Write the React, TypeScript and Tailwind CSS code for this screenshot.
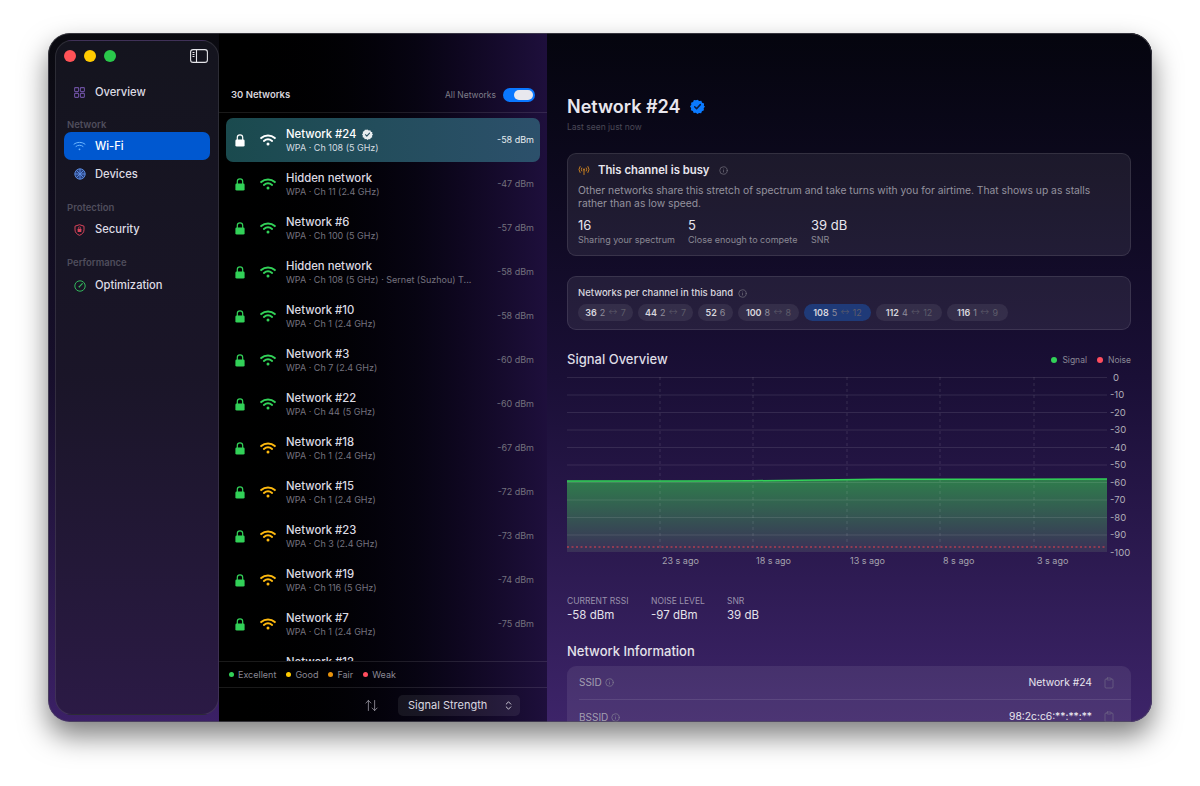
import { ArrowUpDown, ChevronsUpDown, Info, Clipboard } from "lucide-react";

const networks = [
  { name: "Network #24", sub: "WPA · Ch 108 (5 GHz)", dbm: "-58 dBm", tone: "white", verified: true },
  { name: "Hidden network", sub: "WPA · Ch 11 (2.4 GHz)", dbm: "-47 dBm", tone: "green" },
  { name: "Network #6", sub: "WPA · Ch 100 (5 GHz)", dbm: "-57 dBm", tone: "green" },
  { name: "Hidden network", sub: "WPA · Ch 108 (5 GHz) · Sernet (Suzhou) T...", dbm: "-58 dBm", tone: "green" },
  { name: "Network #10", sub: "WPA · Ch 1 (2.4 GHz)", dbm: "-58 dBm", tone: "green" },
  { name: "Network #3", sub: "WPA · Ch 7 (2.4 GHz)", dbm: "-60 dBm", tone: "green" },
  { name: "Network #22", sub: "WPA · Ch 44 (5 GHz)", dbm: "-60 dBm", tone: "green" },
  { name: "Network #18", sub: "WPA · Ch 1 (2.4 GHz)", dbm: "-67 dBm", tone: "yellow" },
  { name: "Network #15", sub: "WPA · Ch 1 (2.4 GHz)", dbm: "-72 dBm", tone: "yellow" },
  { name: "Network #23", sub: "WPA · Ch 3 (2.4 GHz)", dbm: "-73 dBm", tone: "yellow" },
  { name: "Network #19", sub: "WPA · Ch 116 (5 GHz)", dbm: "-74 dBm", tone: "yellow" },
  { name: "Network #7", sub: "WPA · Ch 1 (2.4 GHz)", dbm: "-75 dBm", tone: "yellow" },
  // only the top of this row shows above the legend
  { name: "Network #12", sub: "", dbm: "", tone: "" },
];

const toneColor: Record<string, string> = { white: "#ffffff", green: "#32d158", yellow: "#fdb90f" };

const channels = [
  { ch: "36", a: "2", b: "7", w: "w-[55px]" },
  { ch: "44", a: "2", b: "7", w: "w-[55px]" },
  { ch: "52", a: "6", b: "", w: "w-[35px]" },
  { ch: "100", a: "8", b: "8", w: "w-[61px]" },
  { ch: "108", a: "5", b: "12", w: "w-[67px]", active: true },
  { ch: "112", a: "4", b: "12", w: "w-[66px]" },
  { ch: "116", a: "1", b: "9", w: "w-[61px]" },
];

function Wifi({ color }: { color: string }) {
  return (
    <svg width="16" height="12" viewBox="0 0 16 12" fill="none" stroke={color} strokeWidth="2" strokeLinecap="round">
      <path d="M1.200 4.100C5 .7 11 .7 14.800 4.100" />
      <path d="M3.900 6.900c2.400-2 5.800-2 8.200 0" />
      <circle cx="8" cy="10" r="1.500" fill={color} stroke="none" />
    </svg>
  );
}

function Lock({ color }: { color: string }) {
  return (
    <svg width="10" height="13" viewBox="0 0 10 13" fill="none">
      <path d="M2.300 6V3.600a2.700 2.700 0 0 1 5.400 0V6" stroke={color} strokeWidth="1.200" />
      <rect x=".4" y="5.400" width="9.200" height="7.200" rx="1.400" fill={color} />
    </svg>
  );
}

function Badge({ size, fill, check }: { size: number; fill: string; check: string }) {
  return (
    <svg width={size} height={size} viewBox="0 0 24 24">
      <path
        fill={fill}
        d="M12 1l2.700 2.100 3.400-.4 1.300 3.200 3.200 1.300-.4 3.400L24 12l-2.100 2.700.4 3.400-3.200 1.300-1.300 3.200-3.400-.4L12 24l-2.700-2.100-3.400.4-1.300-3.200-3.200-1.300.4-3.400L0 12l2.100-2.700-.4-3.400 3.200-1.300 1.300-3.200 3.400.4z"
      />
      <path d="M7.500 12.500l3 3 6-6.500" fill="none" stroke={check} strokeWidth="2.400" strokeLinecap="round" strokeLinejoin="round" />
    </svg>
  );
}

function NavItem({ icon, label, active }: { icon: React.ReactNode; label: string; active?: boolean }) {
  return (
    <div className={`flex h-[28px] items-center rounded-[7px] pl-[7px] text-[11.200px] font-medium ${active ? "bg-[#0058d0] text-white" : "text-[#dedce4]"}`}>
      <span className="flex w-[17px] justify-center">{icon}</span>
      <span className="ml-[7px]">{label}</span>
    </div>
  );
}

function SectionLabel({ children }: { children: string }) {
  return <div className="pl-[3px] text-[9.500px] font-semibold text-[#4f4d5c]">{children}</div>;
}

function Sidebar() {
  return (
    <aside className="flex w-[164px] flex-col rounded-[17px] border border-white/10 bg-gradient-to-b from-[#14141e] via-[#1a1528] to-[#2b1a45] px-[8px] pt-[8px]">
      <div className="flex h-[14px] items-center">
        <span className="h-[12px] w-[12px] rounded-full bg-[#ff5257]" />
        <span className="ml-[8px] h-[12px] w-[12px] rounded-full bg-[#ffcb00]" />
        <span className="ml-[8px] h-[12px] w-[12px] rounded-full bg-[#2ac84b]" />
        <svg className="ml-auto mr-[2px]" width="18" height="14" viewBox="0 0 18 14" fill="none">
          <rect x=".6" y=".6" width="16.800" height="12.800" rx="2.500" stroke="#e5e5ea" strokeWidth="1.100" />
          <path d="M6.500 .6v12.800" stroke="#e5e5ea" strokeWidth="1.100" />
          <path d="M2.500 3.500h2M2.500 5.500h2M2.500 7.500h2" stroke="#e5e5ea" strokeWidth="1" />
        </svg>
      </div>
      <div className="mt-[15px]">
        <NavItem
          label="Overview"
          icon={
            <svg width="11" height="11" viewBox="0 0 11 11" fill="none" stroke="#6b4f9e" strokeWidth="1.100">
              <rect x=".6" y=".6" width="4" height="4" rx=".8" />
              <rect x="6.400" y=".6" width="4" height="4" rx=".8" />
              <rect x=".6" y="6.400" width="4" height="4" rx=".8" />
              <rect x="6.400" y="6.400" width="4" height="4" rx=".8" />
            </svg>
          }
        />
      </div>
      <div className="mt-[12px]">
        <SectionLabel>Network</SectionLabel>
      </div>
      <NavItem
        active
        label="Wi-Fi"
        icon={
          <svg width="13" height="10" viewBox="0 0 13 10" fill="none" stroke="#6cb6ff" strokeWidth="1" strokeLinecap="round">
            <path d="M1 3.200c3-2.500 8-2.500 11 0" />
            <path d="M3 5.400c2-1.600 5-1.600 7 0" />
            <circle cx="6.500" cy="8.300" r=".9" fill="#6cb6ff" stroke="none" />
          </svg>
        }
      />
      <NavItem
        label="Devices"
        icon={
          <svg width="12" height="12" viewBox="0 0 12 12" fill="none" stroke="#5d8ee6" strokeWidth=".9">
            <circle cx="6" cy="6" r="5.200" fill="#28407c" />
            <path d="M6 .8v10.400M.8 6h10.400M2.400 2.400l7.200 7.200M9.600 2.400l-7.200 7.200" />
          </svg>
        }
      />
      <div className="mt-[13px]">
        <SectionLabel>Protection</SectionLabel>
      </div>
      <NavItem
        label="Security"
        icon={
          <svg width="11" height="12" viewBox="0 0 11 12" fill="none">
            <path d="M5.500 .7l4.500 1.500v3.600c0 2.800-2 4.600-4.500 5.500C3 10.400 1 8.600 1 5.800V2.200z" stroke="#d9445a" strokeWidth="1" />
            <rect x="3.600" y="4.700" width="3.800" height="3.300" rx=".5" fill="#d9445a" />
            <path d="M4.400 4.800V4a1.100 1.100 0 0 1 2.200 0v.8" stroke="#d9445a" strokeWidth=".7" />
          </svg>
        }
      />
      <div className="mt-[12px] mb-[2px]">
        <SectionLabel>Performance</SectionLabel>
      </div>
      <NavItem
        label="Optimization"
        icon={
          <svg width="12" height="12" viewBox="0 0 12 12" fill="none" stroke="#32b65c" strokeWidth="1">
            <circle cx="6" cy="6" r="5.200" />
            <path d="M5.400 6.600L8.300 3.600" strokeWidth="1.200" strokeLinecap="round" />
            <circle cx="5.300" cy="6.700" r=".8" fill="#32b65c" stroke="none" />
          </svg>
        }
      />
    </aside>
  );
}

function NetworkRow({ n }: { n: (typeof networks)[number] }) {
  const selected = n.verified;
  return (
    <div className={`flex h-[44px] shrink-0 items-center rounded-[7px] ${selected ? "bg-gradient-to-r from-[#1a4a4e] to-[#2c506b]" : ""}`}>
      <span className="flex w-[28px] justify-center">{n.tone && <Lock color={selected ? "#ffffff" : "#32d158"} />}</span>
      <span className="ml-[6px] flex w-[16px] justify-center">{n.tone && <Wifi color={toneColor[n.tone]} />}</span>
      <div className="ml-[10px] min-w-0 flex-1">
        <div className={`flex items-center text-[11.300px] font-medium leading-[17px] ${selected ? "text-white" : "text-[#dcdae2]"}`}>
          {n.name}
          {selected && (
            <span className="ml-[5px]">
              <Badge size={11} fill="#e8edf0" check="#2a5060" />
            </span>
          )}
        </div>
        <div className={`-mt-[2px] h-[13px] whitespace-nowrap text-[9px] leading-[13px] ${selected ? "text-[#d5dde2]" : "text-[#75737f]"}`}>{n.sub}</div>
      </div>
      {n.dbm && <span className={`mr-[6px] text-[9px] ${selected ? "text-[#e6ecef]" : "text-[#73717d]"}`}>{n.dbm}</span>}
    </div>
  );
}

function ListPanel() {
  return (
    <section className="flex w-[328px] flex-col bg-gradient-to-r from-black via-[#070412] via-60% to-[#1e0f3c]">
      <div className="flex h-[80px] items-end border-b border-white/10 px-[12px] pb-[10px]">
        <span className="text-[9.500px] font-semibold leading-[14px] text-[#d6d4dc]">30 Networks</span>
        <span className="ml-auto text-[8.500px] leading-[14px] text-[#7f7d89]">All Networks</span>
        <span className="ml-[7px] flex h-[14px] w-[32px] items-center justify-end rounded-full bg-[#0a78ff] pr-[2px]">
          <span className="h-[10px] w-[19px] rounded-full bg-[#e8e8ee]" />
        </span>
      </div>
      <div className="flex min-h-0 flex-1 flex-col overflow-hidden px-[7px] pt-[5px]">
        {networks.map((n, i) => (
          <NetworkRow key={i} n={n} />
        ))}
      </div>
      <div className="flex h-[27px] shrink-0 items-center gap-[10px] border-y border-white/10 pl-[10px] text-[9px] leading-[12px] text-[#8a8894]">
        <Legend color="bg-[#32d158]" label="Excellent" />
        <Legend color="bg-[#ffcc00]" label="Good" />
        <Legend color="bg-[#e8930c]" label="Fair" />
        <Legend color="bg-[#ff4d5e]" label="Weak" />
      </div>
      <div className="flex h-[34px] shrink-0 items-center justify-end pr-[27px]">
        <ArrowUpDown size={15} strokeWidth={1.200} color="#a8a6b0" className="mr-[19px]" />
        <div className="flex h-[21px] w-[122px] items-center rounded-[5px] bg-white/[0.07] pl-[10px] text-[11px] text-[#dad8e0]">
          Signal Strength
          <ChevronsUpDown size={11} color="#dad8e0" className="ml-auto mr-[6px]" />
        </div>
      </div>
    </section>
  );
}

function Legend({ color, label }: { color: string; label: string }) {
  return (
    <span className="flex shrink-0 items-center gap-[4px] whitespace-nowrap">
      <span className={`h-[5px] w-[5px] rounded-full ${color}`} />
      {label}
    </span>
  );
}

function Stat({ value, label, className }: { value: string; label: string; className: string }) {
  return (
    <div className={className}>
      <div className="text-[13px] leading-[17px] text-[#e8e6ee]">{value}</div>
      <div className="-mt-[1px] text-[9px] leading-[13px] text-[#8b8994]">{label}</div>
    </div>
  );
}

function SignalChart() {
  const ys = [0, 10, 20, 30, 40, 50, 60, 70, 80, 90];
  const xs = [93, 186, 280, 373, 467];
  const ticks = [
    { x: 95, t: "23 s ago" },
    { x: 189, t: "18 s ago" },
    { x: 283, t: "13 s ago" },
    { x: 376, t: "8 s ago" },
    { x: 470, t: "3 s ago" },
  ];
  const line = "M0 105 L120 105 C180 105 220 104.500 290 103.500 C340 103 370 103 540 103";
  return (
    <svg width="564" height="198" viewBox="0 0 564 198" className="mt-[7px] block overflow-visible">
      <defs>
        <linearGradient id="area" x1="0" y1="103" x2="0" y2="176" gradientUnits="userSpaceOnUse">
          <stop offset="0" stopColor="#2f7d4c" />
          <stop offset="1" stopColor="#3a3058" />
        </linearGradient>
      </defs>
      <path d={`${line} V176 H0 Z`} fill="url(#area)" />
      {ys.map((v) => (
        <line key={v} x1="0" x2="540" y1={1.500 + v * 1.750} y2={1.500 + v * 1.750} stroke="#ffffff" strokeOpacity=".1" />
      ))}
      {xs.map((x) => (
        <line key={x} x1={x} x2={x} y1="1" y2="172" stroke="#ffffff" strokeOpacity=".12" strokeDasharray="3 3" />
      ))}
      <path d={line} fill="none" stroke="#32d158" strokeWidth="1.500" />
      <line x1="0" x2="540" y1="171" y2="171" stroke="#e8434f" strokeWidth="1.200" strokeDasharray="2 2.500" />
      {[...ys, 100].map((v) => (
        <text key={v} x={v === 0 ? 546 : 543} y={4.500 + v * 1.750} fontSize="9.500" fill="#b0aeb8">
          {v === 0 ? "0" : `-${v}`}
        </text>
      ))}
      {ticks.map((t) => (
        <text key={t.t} x={t.x} y="188" fontSize="9" fill="#a5a3ae">
          {t.t}
        </text>
      ))}
    </svg>
  );
}

function InfoRow({ label, value, border }: { label: string; value: string; border?: boolean }) {
  return (
    <div className={`ml-[12px] flex h-[34px] shrink-0 items-center pr-[16px] ${border ? "border-b border-white/10" : ""}`}>
      <span className="text-[10px] text-[#a39fb0]">{label}</span>
      <Info size={9} color="#7f7a90" className="ml-[3px]" />
      <span className="ml-auto text-[10.300px] text-[#e8e6ee]">{value}</span>
      <Clipboard size={12} strokeWidth={1.200} color="#77708c" className="ml-[11px]" />
    </div>
  );
}

function DetailPanel() {
  return (
    <section className="min-w-0 flex-1 overflow-hidden bg-gradient-to-b from-[#05050e] via-[#1a0f36] via-50% to-[#3d2469] pl-[20px] pr-[21px]">
      <div className="mt-[60px] flex h-[26px] items-center">
        <h1 className="text-[18px] font-semibold text-[#e9e7ee]">Network #24</h1>
        <span className="ml-[9px]">
          <Badge size={15} fill="#0a7aff" check="#0a1a40" />
        </span>
      </div>
      <div className="mt-[1px] text-[8.500px] leading-[14px] text-[#4a4856]">Last seen just now</div>

      <div className="mt-[19px] h-[103px] rounded-[9px] border border-white/10 bg-white/[0.07] px-[10px] pt-[8px]">
        <div className="flex h-[16px] items-center">
          <svg width="12" height="12" viewBox="0 0 12 12" fill="none" stroke="#d98a1f" strokeWidth=".9" strokeLinecap="round">
            <path d="M2 2.500a5 5 0 0 0 0 6M10 2.500a5 5 0 0 1 0 6M3.700 4a2.800 2.800 0 0 0 0 3M8.300 4a2.800 2.800 0 0 1 0 3" />
            <circle cx="6" cy="5.500" r=".9" fill="#d98a1f" stroke="none" />
            <path d="M6 6.500v4" />
          </svg>
          <span className="ml-[8px] text-[11.300px] font-semibold text-[#e8e6ee]">This channel is busy</span>
          <Info size={9} color="#6d6b78" className="ml-[9px]" />
        </div>
        <p className="mt-[6px] text-[10.300px] leading-[13px] text-[#94929e]">
          Other networks share this stretch of spectrum and take turns with you for airtime. That shows up as stalls
          <br />
          rather than as low speed.
        </p>
        <div className="mt-[7px] flex">
          <Stat value="16" label="Sharing your spectrum" className="w-[110px]" />
          <Stat value="5" label="Close enough to compete" className="w-[123px]" />
          <Stat value="39 dB" label="SNR" className="" />
        </div>
      </div>

      <div className="mt-[20px] h-[54px] rounded-[9px] border border-white/10 bg-white/[0.07] px-[10px] pt-[9px]">
        <div className="flex h-[14px] items-center text-[9.500px] font-medium text-[#d8d6de]">
          Networks per channel in this band
          <Info size={9} color="#6d6b78" className="ml-[5px]" />
        </div>
        <div className="mt-[4px] flex gap-[5px]">
          {channels.map((c) => (
            <span
              key={c.ch}
              className={`flex h-[17px] items-center justify-center gap-[3px] rounded-full text-[9px] ${c.w} ${c.active ? "bg-[#1f3a78]" : "bg-white/[0.07]"}`}
            >
              <b className="font-semibold text-[#d8d6de]">{c.ch}</b>
              <span className="text-[#8f8d9a]">{c.a}</span>
              {c.b && <span className="text-[7px] text-[#5e5c6a]">↔</span>}
              {c.b && <span className="text-[#5e5c6a]">{c.b}</span>}
            </span>
          ))}
        </div>
      </div>

      <div className="mt-[21px] flex h-[18px] items-center">
        <h2 className="text-[13px] font-medium text-[#dfdde5]">Signal Overview</h2>
        <span className="ml-auto flex items-center gap-[5px] text-[8.500px] text-[#8a8894]">
          <span className="h-[6px] w-[6px] rounded-full bg-[#32d158]" />
          Signal
          <span className="ml-[5px] h-[6px] w-[6px] rounded-full bg-[#ff4d5e]" />
          Noise
        </span>
      </div>

      <SignalChart />

      <div className="mt-[21px] flex">
        <div className="w-[84px]">
          <div className="text-[8.500px] leading-[12px] text-[#9a92ac]">CURRENT RSSI</div>
          <div className="mt-[1px] text-[11.500px] leading-[14px] text-[#e4e2ea]">-58 dBm</div>
        </div>
        <div className="w-[76px]">
          <div className="text-[8.500px] leading-[12px] text-[#9a92ac]">NOISE LEVEL</div>
          <div className="mt-[1px] text-[11.500px] leading-[14px] text-[#e4e2ea]">-97 dBm</div>
        </div>
        <div>
          <div className="text-[8.500px] leading-[12px] text-[#9a92ac]">SNR</div>
          <div className="mt-[1px] text-[11.500px] leading-[14px] text-[#e4e2ea]">39 dB</div>
        </div>
      </div>

      <h2 className="mt-[20px] text-[13px] font-medium leading-[18px] text-[#e4e2ea]">Network Information</h2>
      <div className="mt-[6px] rounded-[9px] bg-white/[0.08]">
        <InfoRow label="SSID" value="Network #24" border />
        <InfoRow label="BSSID" value="98:2c:c6:**:**:**" />
      </div>
    </section>
  );
}

export default function App() {
  return (
    <div className="h-[786px] w-[1200px] overflow-hidden bg-white px-[48px] pt-[33px] [font-family:Inter,sans-serif]">
      <div className="relative flex h-[689px] w-[1104px] overflow-hidden rounded-[22px] bg-gradient-to-b from-[#0a0a10] via-[#170f2c] to-[#3b2066] shadow-[0_14px_28px_rgba(0,0,0,0.5)]">
        <div className="w-[171px] shrink-0 p-[7px] pr-0">
          <div className="flex h-full">
            <Sidebar />
          </div>
        </div>
        <ListPanel />
        <DetailPanel />
        <div className="pointer-events-none absolute inset-0 rounded-[22px] border border-[#55535e]/60" />
      </div>
    </div>
  );
}
